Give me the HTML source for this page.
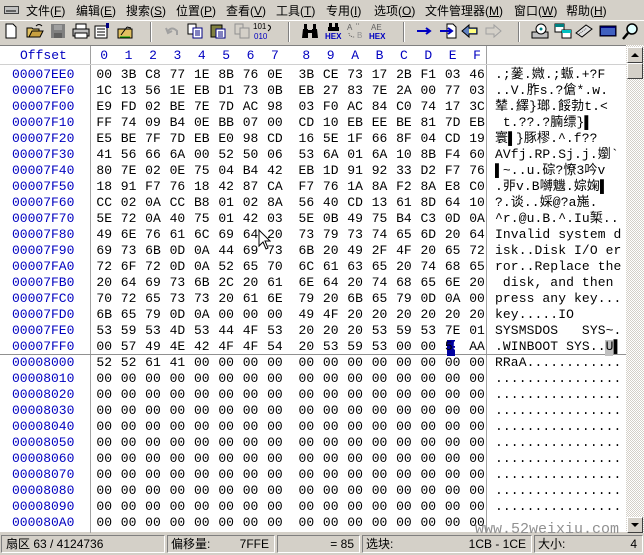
<!DOCTYPE html>
<html><head><meta charset="utf-8"><style>
*{margin:0;padding:0;box-sizing:border-box}
body{width:644px;height:555px;background:#d4d0c8;position:relative;overflow:hidden;font-family:"Liberation Sans","Noto Sans CJK SC",sans-serif}
.menu{position:absolute;top:0;left:0;width:644px;height:20px;font-size:12px;color:#000}
.menu span{position:absolute;top:2px;white-space:nowrap}
.ic{position:absolute;top:23px}
.sep{position:absolute;top:22px;width:2px;height:20px;border-left:1px solid #808080;border-right:1px solid #fff}
.main{position:absolute;left:0;top:45px;width:626px;height:487px;background:#fff;border-top:1px solid #808080}
.mono{font-family:"Liberation Mono","Noto Sans CJK SC",monospace;font-size:13px}
.row{position:absolute;left:0;height:16px;line-height:16px;white-space:pre}
.off{position:absolute;left:12px;color:#0000c0}
.hx{position:absolute;left:92px;color:#000}
.hx i{display:inline-block;width:24.4px;text-align:center;font-style:normal}
.hx i:nth-child(9){margin-left:7px}
.as{position:absolute;left:495px;color:#000;letter-spacing:0.1px}
.vl{position:absolute;top:0;width:1px;height:487px;background:#a0a0a0}
.hd{color:#0000c0}
.sb{position:absolute;left:626px;top:45px;width:18px;height:488px;background:repeating-conic-gradient(#d4d0c8 0 25%,#fff 0 50%) 0 0/2px 2px}
.btn{position:absolute;left:627px;width:16px;height:16px;background:#d4d0c8;border:1px solid;border-color:#fff #404040 #404040 #fff}
.st{position:absolute;top:533px;left:0;width:644px;height:22px;font-size:12px}
.cell{position:absolute;top:2px;height:18px;border:1px solid;border-color:#808080 #fff #fff #808080;line-height:16px;white-space:nowrap}
</style></head><body>
<div class="menu">
<svg style="position:absolute;left:4px;top:5px" width="16" height="10"><rect x="0.5" y="1.5" width="14" height="7" fill="#c0c0c0" stroke="#404040"/><rect x="2" y="5" width="10" height="2" fill="#606060"/></svg>
<span style="left:26px">文件(<u>F</u>)</span>
<span style="left:76px">编辑(<u>E</u>)</span>
<span style="left:126px">搜索(<u>S</u>)</span>
<span style="left:176px">位置(<u>P</u>)</span>
<span style="left:226px">查看(<u>V</u>)</span>
<span style="left:276px">工具(<u>T</u>)</span>
<span style="left:326px">专用(<u>I</u>)</span>
<span style="left:374px">选项(<u>O</u>)</span>
<span style="left:425px">文件管理器(<u>M</u>)</span>
<span style="left:514px">窗口(<u>W</u>)</span>
<span style="left:566px">帮助(<u>H</u>)</span>
</div>
<div style="position:absolute;top:20px;left:0;width:644px;height:1px;background:#fff"></div>
<!-- toolbar -->
<svg class="ic" style="left:4px" width="14" height="16"><path d="M2 1h7l3 3v11H2z" fill="#fff" stroke="#000"/></svg>
<svg class="ic" style="left:26px" width="18" height="16"><path d="M1 5h5l1 1h6v8H1z" fill="#e0c060" stroke="#000"/><path d="M3 14l3-6h11l-3 6z" fill="#c8a040" stroke="#000"/><path d="M10 3q3-3 6 0" fill="none" stroke="#000"/></svg>
<svg class="ic" style="left:50px" width="16" height="16"><rect x="1" y="1" width="14" height="14" fill="#808080"/><rect x="4" y="2" width="8" height="5" fill="#a0a0a0"/><rect x="4" y="10" width="8" height="5" fill="#606060"/></svg>
<svg class="ic" style="left:72px" width="18" height="16"><rect x="4" y="1" width="10" height="5" fill="#fff" stroke="#000"/><rect x="1" y="6" width="16" height="7" fill="#c0c0c0" stroke="#000"/><rect x="3" y="10" width="12" height="5" fill="#fff" stroke="#000"/></svg>
<svg class="ic" style="left:94px" width="18" height="16"><rect x="1" y="3" width="12" height="12" fill="#fff" stroke="#000"/><path d="M3 6h8M3 9h8M3 12h8" stroke="#000"/><rect x="12" y="0" width="3" height="5" fill="#000080"/></svg>
<svg class="ic" style="left:117px" width="18" height="16"><path d="M1 6h14v9H1z" fill="#e0c060" stroke="#000"/><path d="M4 12l6-8M10 4l4 1" stroke="#000"/><path d="M3 14h10" stroke="#00a000"/></svg>
<div class="sep" style="left:150px"></div>
<svg class="ic" style="left:164px" width="16" height="16"><path d="M4 8q4-5 9 0v4" fill="none" stroke="#a0a0a0" stroke-width="2"/><path d="M2 5l2 5 4-2" fill="none" stroke="#a0a0a0" stroke-width="2"/></svg>
<svg class="ic" style="left:187px" width="16" height="16"><rect x="1" y="1" width="8" height="10" fill="#fff" stroke="#000"/><rect x="6" y="5" width="9" height="10" fill="#fff" stroke="#000080"/><path d="M8 8h5M8 10h5M8 12h5" stroke="#000080"/></svg>
<svg class="ic" style="left:210px" width="16" height="16"><rect x="1" y="2" width="11" height="12" fill="#808040" stroke="#000"/><rect x="6" y="6" width="9" height="9" fill="#fff" stroke="#000080"/><path d="M8 9h5M8 11h5M8 13h5" stroke="#000080"/></svg>
<svg class="ic" style="left:234px" width="16" height="16"><rect x="1" y="1" width="8" height="10" fill="#d4d0c8" stroke="#909090"/><rect x="6" y="5" width="9" height="10" fill="#d4d0c8" stroke="#909090"/></svg>
<svg class="ic" style="left:253px;top:22px" width="22" height="18"><text x="0" y="7" font-size="8" font-family="Liberation Sans">101</text><text x="1" y="17" font-size="8" fill="#0000c0" font-family="Liberation Sans">010</text><path d="M15 3q5 2 0 6" fill="none" stroke="#000"/></svg>
<div class="sep" style="left:288px"></div>
<svg class="ic" style="left:301px" width="18" height="16"><path d="M2 6h5v9H1zM11 6h5l1 9h-6z" fill="#000"/><rect x="3" y="1" width="3" height="6" fill="#000"/><rect x="12" y="1" width="3" height="6" fill="#000"/><rect x="7" y="7" width="4" height="3" fill="#000"/></svg>
<svg class="ic" style="left:324px;top:22px" width="20" height="18"><path d="M5 1h3v5H5zM11 1h3v5h-3zM4 5h11v4H4z" fill="#000"/><text x="1" y="17" font-size="8" fill="#0000c0" font-weight="bold" font-family="Liberation Sans">HEX</text></svg>
<svg class="ic" style="left:346px;top:22px" width="20" height="18"><text x="1" y="8" font-size="8" fill="#606060">A</text><text x="11" y="16" font-size="8" fill="#909090">B</text><path d="M10 2l4 0M3 11q0 4 6 4" fill="none" stroke="#606060" stroke-dasharray="1 1"/></svg>
<svg class="ic" style="left:368px;top:22px" width="20" height="18"><text x="3" y="8" font-size="8" fill="#606060">AE</text><text x="1" y="17" font-size="8" fill="#0000c0" font-weight="bold" font-family="Liberation Sans">HEX</text></svg>
<div class="sep" style="left:403px"></div>
<svg class="ic" style="left:416px" width="18" height="16"><path d="M1 8h13M10 5l4 3-4 3" fill="none" stroke="#0000c0" stroke-width="2"/></svg>
<svg class="ic" style="left:439px" width="18" height="16"><path d="M8 1h6l3 3v11H8z" fill="#fff" stroke="#000"/><path d="M1 8h12M9 5l4 3-4 3" fill="none" stroke="#0000c0" stroke-width="2"/></svg>
<svg class="ic" style="left:461px" width="18" height="16"><path d="M1 8l7-6v3h8v6H8v3z" fill="#6080c0" stroke="#000"/><path d="M8 6h7v4H8" fill="#ffff80"/></svg>
<svg class="ic" style="left:484px" width="18" height="16"><path d="M17 8l-7-6v3H2v6h8v3z" fill="#d4d0c8" stroke="#a0a0a0"/></svg>
<div class="sep" style="left:518px"></div>
<svg class="ic" style="left:531px" width="18" height="16"><rect x="1" y="9" width="16" height="6" fill="#c0c0c0" stroke="#000"/><circle cx="10" cy="6" r="5" fill="#fff" stroke="#000"/><circle cx="10" cy="6" r="1.5" fill="#008080"/></svg>
<svg class="ic" style="left:554px" width="18" height="16"><rect x="1" y="1" width="9" height="8" fill="#fff" stroke="#000"/><rect x="1" y="1" width="9" height="3" fill="#008080"/><rect x="8" y="7" width="9" height="8" fill="#fff" stroke="#000"/><rect x="8" y="7" width="9" height="3" fill="#00c0c0"/></svg>
<svg class="ic" style="left:575px" width="18" height="16"><path d="M1 10l10-8 6 4-10 8z" fill="#e0e0e0" stroke="#000"/><path d="M4 11l8-6" stroke="#606060" stroke-dasharray="1 1"/></svg>
<svg class="ic" style="left:599px" width="18" height="16"><rect x="1" y="3" width="16" height="10" fill="#000080" stroke="#000"/><path d="M3 5v7M5 5v7M7 5v7M9 5v7M11 5v7M13 5v7M15 5v7" stroke="#80c0ff"/></svg>
<svg class="ic" style="left:621px" width="18" height="17"><circle cx="11" cy="6" r="5" fill="#e0ffff" stroke="#000" stroke-width="1.5"/><path d="M7 10l-5 6" stroke="#000" stroke-width="2.5"/></svg>

<div class="main mono">
<div class="vl" style="left:90px"></div>
<div class="vl" style="left:486px"></div>
<div style="position:absolute;left:0;top:18px;width:626px;height:1px;background:#d0d0d0"></div>
<div class="row hd" style="top:2px"><span style="position:absolute;left:20px">Offset</span><span class="hx" style="color:#0000c0"><i>0</i><i>1</i><i>2</i><i>3</i><i>4</i><i>5</i><i>6</i><i>7</i><i>8</i><i>9</i><i>A</i><i>B</i><i>C</i><i>D</i><i>E</i><i>F</i></span></div>
<div style="position:absolute;left:0;top:308px;width:626px;height:1px;background:#909090"></div>
<div style="position:absolute;left:447px;top:294px;width:8px;height:16px;background:#0000a0"></div>
<div style="position:absolute;left:605px;top:294px;width:8px;height:16px;background:#c0c0c0"></div>

<div class="row" style="top:21px"><span class="off">00007EE0</span><span class="hx"><i>00</i><i>3B</i><i>C8</i><i>77</i><i>1E</i><i>8B</i><i>76</i><i>0E</i><i>3B</i><i>CE</i><i>73</i><i>17</i><i>2B</i><i>F1</i><i>03</i><i>46</i></span><span class="as">.;蓌.媺.;蝂.+?F</span></div>
<div class="row" style="top:37px"><span class="off">00007EF0</span><span class="hx"><i>1C</i><i>13</i><i>56</i><i>1E</i><i>EB</i><i>D1</i><i>73</i><i>0B</i><i>EB</i><i>27</i><i>83</i><i>7E</i><i>2A</i><i>00</i><i>77</i><i>03</i></span><span class="as">..V.胙s.?傖*.w.</span></div>
<div class="row" style="top:53px"><span class="off">00007F00</span><span class="hx"><i>E9</i><i>FD</i><i>02</i><i>BE</i><i>7E</i><i>7D</i><i>AC</i><i>98</i><i>03</i><i>F0</i><i>AC</i><i>84</i><i>C0</i><i>74</i><i>17</i><i>3C</i></span><span class="as">辇.繹}瑯.餒勃t.&lt;</span></div>
<div class="row" style="top:69px"><span class="off">00007F10</span><span class="hx"><i>FF</i><i>74</i><i>09</i><i>B4</i><i>0E</i><i>BB</i><i>07</i><i>00</i><i>CD</i><i>10</i><i>EB</i><i>EE</i><i>BE</i><i>81</i><i>7D</i><i>EB</i></span><span class="as"> t.??.?腩缥}▌</span></div>
<div class="row" style="top:85px"><span class="off">00007F20</span><span class="hx"><i>E5</i><i>BE</i><i>7F</i><i>7D</i><i>EB</i><i>E0</i><i>98</i><i>CD</i><i>16</i><i>5E</i><i>1F</i><i>66</i><i>8F</i><i>04</i><i>CD</i><i>19</i></span><span class="as">寰▌}豚樛.^.f??</span></div>
<div class="row" style="top:101px"><span class="off">00007F30</span><span class="hx"><i>41</i><i>56</i><i>66</i><i>6A</i><i>00</i><i>52</i><i>50</i><i>06</i><i>53</i><i>6A</i><i>01</i><i>6A</i><i>10</i><i>8B</i><i>F4</i><i>60</i></span><span class="as">AVfj.RP.Sj.j.嬼`</span></div>
<div class="row" style="top:117px"><span class="off">00007F40</span><span class="hx"><i>80</i><i>7E</i><i>02</i><i>0E</i><i>75</i><i>04</i><i>B4</i><i>42</i><i>EB</i><i>1D</i><i>91</i><i>92</i><i>33</i><i>D2</i><i>F7</i><i>76</i></span><span class="as">▌~..u.碂?憭3吟v</span></div>
<div class="row" style="top:133px"><span class="off">00007F50</span><span class="hx"><i>18</i><i>91</i><i>F7</i><i>76</i><i>18</i><i>42</i><i>87</i><i>CA</i><i>F7</i><i>76</i><i>1A</i><i>8A</i><i>F2</i><i>8A</i><i>E8</i><i>C0</i></span><span class="as">.戼v.B嚩魕.婃婅▌</span></div>
<div class="row" style="top:149px"><span class="off">00007F60</span><span class="hx"><i>CC</i><i>02</i><i>0A</i><i>CC</i><i>B8</i><i>01</i><i>02</i><i>8A</i><i>56</i><i>40</i><i>CD</i><i>13</i><i>61</i><i>8D</i><i>64</i><i>10</i></span><span class="as">?.谈..婇@?a崺.</span></div>
<div class="row" style="top:165px"><span class="off">00007F70</span><span class="hx"><i>5E</i><i>72</i><i>0A</i><i>40</i><i>75</i><i>01</i><i>42</i><i>03</i><i>5E</i><i>0B</i><i>49</i><i>75</i><i>B4</i><i>C3</i><i>0D</i><i>0A</i></span><span class="as">^r.@u.B.^.Iu椠..</span></div>
<div class="row" style="top:181px"><span class="off">00007F80</span><span class="hx"><i>49</i><i>6E</i><i>76</i><i>61</i><i>6C</i><i>69</i><i>64</i><i>20</i><i>73</i><i>79</i><i>73</i><i>74</i><i>65</i><i>6D</i><i>20</i><i>64</i></span><span class="as">Invalid system d</span></div>
<div class="row" style="top:197px"><span class="off">00007F90</span><span class="hx"><i>69</i><i>73</i><i>6B</i><i>0D</i><i>0A</i><i>44</i><i>69</i><i>73</i><i>6B</i><i>20</i><i>49</i><i>2F</i><i>4F</i><i>20</i><i>65</i><i>72</i></span><span class="as">isk..Disk I/O er</span></div>
<div class="row" style="top:213px"><span class="off">00007FA0</span><span class="hx"><i>72</i><i>6F</i><i>72</i><i>0D</i><i>0A</i><i>52</i><i>65</i><i>70</i><i>6C</i><i>61</i><i>63</i><i>65</i><i>20</i><i>74</i><i>68</i><i>65</i></span><span class="as">ror..Replace the</span></div>
<div class="row" style="top:229px"><span class="off">00007FB0</span><span class="hx"><i>20</i><i>64</i><i>69</i><i>73</i><i>6B</i><i>2C</i><i>20</i><i>61</i><i>6E</i><i>64</i><i>20</i><i>74</i><i>68</i><i>65</i><i>6E</i><i>20</i></span><span class="as"> disk, and then </span></div>
<div class="row" style="top:245px"><span class="off">00007FC0</span><span class="hx"><i>70</i><i>72</i><i>65</i><i>73</i><i>73</i><i>20</i><i>61</i><i>6E</i><i>79</i><i>20</i><i>6B</i><i>65</i><i>79</i><i>0D</i><i>0A</i><i>00</i></span><span class="as">press any key...</span></div>
<div class="row" style="top:261px"><span class="off">00007FD0</span><span class="hx"><i>6B</i><i>65</i><i>79</i><i>0D</i><i>0A</i><i>00</i><i>00</i><i>00</i><i>49</i><i>4F</i><i>20</i><i>20</i><i>20</i><i>20</i><i>20</i><i>20</i></span><span class="as">key.....IO      </span></div>
<div class="row" style="top:277px"><span class="off">00007FE0</span><span class="hx"><i>53</i><i>59</i><i>53</i><i>4D</i><i>53</i><i>44</i><i>4F</i><i>53</i><i>20</i><i>20</i><i>20</i><i>53</i><i>59</i><i>53</i><i>7E</i><i>01</i></span><span class="as">SYSMSDOS   SYS~.</span></div>
<div class="row" style="top:293px"><span class="off">00007FF0</span><span class="hx"><i>00</i><i>57</i><i>49</i><i>4E</i><i>42</i><i>4F</i><i>4F</i><i>54</i><i>20</i><i>53</i><i>59</i><i>53</i><i>00</i><i>00</i><i>5<b style="color:#fff;font-weight:normal">5</b></i><i>AA</i></span><span class="as">.WINBOOT SYS..U▌</span></div>
<div class="row" style="top:309px"><span class="off">00008000</span><span class="hx"><i>52</i><i>52</i><i>61</i><i>41</i><i>00</i><i>00</i><i>00</i><i>00</i><i>00</i><i>00</i><i>00</i><i>00</i><i>00</i><i>00</i><i>00</i><i>00</i></span><span class="as">RRaA............</span></div>
<div class="row" style="top:325px"><span class="off">00008010</span><span class="hx"><i>00</i><i>00</i><i>00</i><i>00</i><i>00</i><i>00</i><i>00</i><i>00</i><i>00</i><i>00</i><i>00</i><i>00</i><i>00</i><i>00</i><i>00</i><i>00</i></span><span class="as">................</span></div>
<div class="row" style="top:341px"><span class="off">00008020</span><span class="hx"><i>00</i><i>00</i><i>00</i><i>00</i><i>00</i><i>00</i><i>00</i><i>00</i><i>00</i><i>00</i><i>00</i><i>00</i><i>00</i><i>00</i><i>00</i><i>00</i></span><span class="as">................</span></div>
<div class="row" style="top:357px"><span class="off">00008030</span><span class="hx"><i>00</i><i>00</i><i>00</i><i>00</i><i>00</i><i>00</i><i>00</i><i>00</i><i>00</i><i>00</i><i>00</i><i>00</i><i>00</i><i>00</i><i>00</i><i>00</i></span><span class="as">................</span></div>
<div class="row" style="top:373px"><span class="off">00008040</span><span class="hx"><i>00</i><i>00</i><i>00</i><i>00</i><i>00</i><i>00</i><i>00</i><i>00</i><i>00</i><i>00</i><i>00</i><i>00</i><i>00</i><i>00</i><i>00</i><i>00</i></span><span class="as">................</span></div>
<div class="row" style="top:389px"><span class="off">00008050</span><span class="hx"><i>00</i><i>00</i><i>00</i><i>00</i><i>00</i><i>00</i><i>00</i><i>00</i><i>00</i><i>00</i><i>00</i><i>00</i><i>00</i><i>00</i><i>00</i><i>00</i></span><span class="as">................</span></div>
<div class="row" style="top:405px"><span class="off">00008060</span><span class="hx"><i>00</i><i>00</i><i>00</i><i>00</i><i>00</i><i>00</i><i>00</i><i>00</i><i>00</i><i>00</i><i>00</i><i>00</i><i>00</i><i>00</i><i>00</i><i>00</i></span><span class="as">................</span></div>
<div class="row" style="top:421px"><span class="off">00008070</span><span class="hx"><i>00</i><i>00</i><i>00</i><i>00</i><i>00</i><i>00</i><i>00</i><i>00</i><i>00</i><i>00</i><i>00</i><i>00</i><i>00</i><i>00</i><i>00</i><i>00</i></span><span class="as">................</span></div>
<div class="row" style="top:437px"><span class="off">00008080</span><span class="hx"><i>00</i><i>00</i><i>00</i><i>00</i><i>00</i><i>00</i><i>00</i><i>00</i><i>00</i><i>00</i><i>00</i><i>00</i><i>00</i><i>00</i><i>00</i><i>00</i></span><span class="as">................</span></div>
<div class="row" style="top:453px"><span class="off">00008090</span><span class="hx"><i>00</i><i>00</i><i>00</i><i>00</i><i>00</i><i>00</i><i>00</i><i>00</i><i>00</i><i>00</i><i>00</i><i>00</i><i>00</i><i>00</i><i>00</i><i>00</i></span><span class="as">................</span></div>
<div class="row" style="top:469px"><span class="off">000080A0</span><span class="hx"><i>00</i><i>00</i><i>00</i><i>00</i><i>00</i><i>00</i><i>00</i><i>00</i><i>00</i><i>00</i><i>00</i><i>00</i><i>00</i><i>00</i><i>00</i><i>00</i></span></div>
<div style="position:absolute;left:475px;top:476px;line-height:15px;font-family:'Liberation Mono',monospace;font-size:15px;color:#909090">www.52weixiu.com</div>
</div>
<svg style="position:absolute;left:258px;top:229px" width="14" height="22"><path d="M1 1v16l4-4 3 7 2-1-3-7h5z" fill="#fff" stroke="#000"/></svg>

<div class="sb"></div>
<div class="btn" style="top:47px"><svg width="14" height="14"><path d="M3 9h8L7 5z" fill="#000"/></svg></div>
<div class="btn" style="top:63px"></div>
<div class="btn" style="top:517px"><svg width="14" height="14"><path d="M3 5h8L7 9z" fill="#000"/></svg></div>

<div class="st">
<div class="cell" style="left:1px;width:164px;padding-left:4px">扇区 63 / 4124736</div>
<div class="cell" style="left:167px;width:108px;padding-left:3px">偏移量:<span style="position:absolute;right:5px">7FFE</span></div>
<div class="cell" style="left:277px;width:83px"><span style="position:absolute;right:5px">= 85</span></div>
<div class="cell" style="left:362px;width:170px;padding-left:3px">选块:<span style="position:absolute;right:5px">1CB - 1CE</span></div>
<div class="cell" style="left:534px;width:109px;padding-left:3px">大小:<span style="position:absolute;right:5px">4</span></div>
</div>
</body></html>
